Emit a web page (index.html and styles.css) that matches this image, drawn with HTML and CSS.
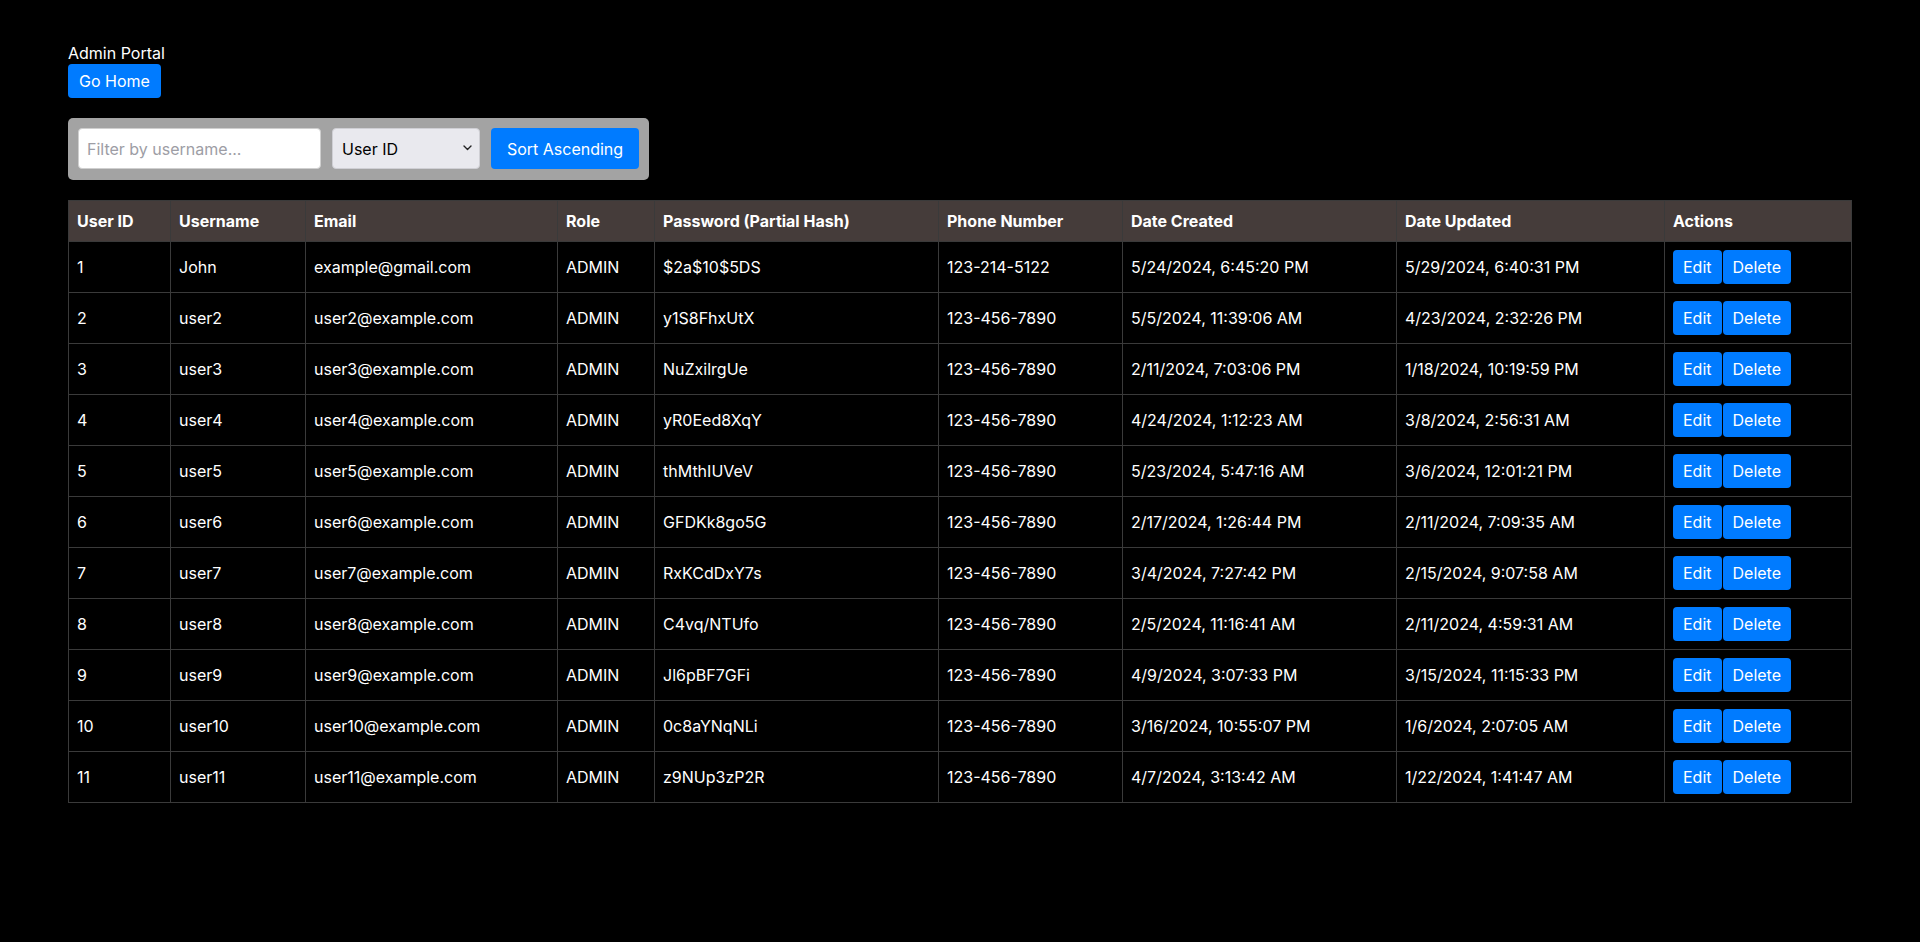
FILE: index.html
```html
<!DOCTYPE html>
<html lang="en">
<head>
<meta charset="utf-8">
<title>Admin Portal</title>
<link rel="stylesheet" href="styles.css">
</head>
<body>
<div class="page">
  <div class="title">Admin Portal</div>
  <button class="btn">Go Home</button>
  <div class="filters">
    <input class="filter-input" type="text" placeholder="Filter by username...">
    <div class="select-wrap">
      <select class="sort-select">
        <option>User ID</option>
        <option>Username</option>
        <option>Email</option>
      </select>
      <svg class="chev" width="9" height="6" viewBox="0 0 9 6"><path d="M1 1l3.5 3.5L8 1" fill="none" stroke="#222" stroke-width="1.4" stroke-linecap="round" stroke-linejoin="round"/></svg>
    </div>
    <button class="btn btn-sort">Sort Ascending</button>
  </div>
  <table class="users">
    <thead>
      <tr>
        <th class="c-id">User ID</th>
        <th class="c-user">Username</th>
        <th class="c-email">Email</th>
        <th class="c-role">Role</th>
        <th class="c-pass">Password (Partial Hash)</th>
        <th class="c-phone">Phone Number</th>
        <th class="c-created">Date Created</th>
        <th class="c-updated">Date Updated</th>
        <th class="c-actions">Actions</th>
      </tr>
    </thead>
    <tbody>
      <tr><td>1</td><td>John</td><td>example@gmail.com</td><td>ADMIN</td><td>$2a$10$5DS</td><td>123-214-5122</td><td>5/24/2024, 6:45:20 PM</td><td>5/29/2024, 6:40:31 PM</td><td><div class="actions"><button class="btn btn-sm">Edit</button><button class="btn btn-sm">Delete</button></div></td></tr>
      <tr><td>2</td><td>user2</td><td>user2@example.com</td><td>ADMIN</td><td>y1S8FhxUtX</td><td>123-456-7890</td><td>5/5/2024, 11:39:06 AM</td><td>4/23/2024, 2:32:26 PM</td><td><div class="actions"><button class="btn btn-sm">Edit</button><button class="btn btn-sm">Delete</button></div></td></tr>
      <tr><td>3</td><td>user3</td><td>user3@example.com</td><td>ADMIN</td><td>NuZxilrgUe</td><td>123-456-7890</td><td>2/11/2024, 7:03:06 PM</td><td>1/18/2024, 10:19:59 PM</td><td><div class="actions"><button class="btn btn-sm">Edit</button><button class="btn btn-sm">Delete</button></div></td></tr>
      <tr><td>4</td><td>user4</td><td>user4@example.com</td><td>ADMIN</td><td>yR0Eed8XqY</td><td>123-456-7890</td><td>4/24/2024, 1:12:23 AM</td><td>3/8/2024, 2:56:31 AM</td><td><div class="actions"><button class="btn btn-sm">Edit</button><button class="btn btn-sm">Delete</button></div></td></tr>
      <tr><td>5</td><td>user5</td><td>user5@example.com</td><td>ADMIN</td><td>thMthIUVeV</td><td>123-456-7890</td><td>5/23/2024, 5:47:16 AM</td><td>3/6/2024, 12:01:21 PM</td><td><div class="actions"><button class="btn btn-sm">Edit</button><button class="btn btn-sm">Delete</button></div></td></tr>
      <tr><td>6</td><td>user6</td><td>user6@example.com</td><td>ADMIN</td><td>GFDKk8go5G</td><td>123-456-7890</td><td>2/17/2024, 1:26:44 PM</td><td>2/11/2024, 7:09:35 AM</td><td><div class="actions"><button class="btn btn-sm">Edit</button><button class="btn btn-sm">Delete</button></div></td></tr>
      <tr><td>7</td><td>user7</td><td>user7@example.com</td><td>ADMIN</td><td>RxKCdDxY7s</td><td>123-456-7890</td><td>3/4/2024, 7:27:42 PM</td><td>2/15/2024, 9:07:58 AM</td><td><div class="actions"><button class="btn btn-sm">Edit</button><button class="btn btn-sm">Delete</button></div></td></tr>
      <tr><td>8</td><td>user8</td><td>user8@example.com</td><td>ADMIN</td><td>C4vq/NTUfo</td><td>123-456-7890</td><td>2/5/2024, 11:16:41 AM</td><td>2/11/2024, 4:59:31 AM</td><td><div class="actions"><button class="btn btn-sm">Edit</button><button class="btn btn-sm">Delete</button></div></td></tr>
      <tr><td>9</td><td>user9</td><td>user9@example.com</td><td>ADMIN</td><td>Jl6pBF7GFi</td><td>123-456-7890</td><td>4/9/2024, 3:07:33 PM</td><td>3/15/2024, 11:15:33 PM</td><td><div class="actions"><button class="btn btn-sm">Edit</button><button class="btn btn-sm">Delete</button></div></td></tr>
      <tr><td>10</td><td>user10</td><td>user10@example.com</td><td>ADMIN</td><td>0c8aYNqNLi</td><td>123-456-7890</td><td>3/16/2024, 10:55:07 PM</td><td>1/6/2024, 2:07:05 AM</td><td><div class="actions"><button class="btn btn-sm">Edit</button><button class="btn btn-sm">Delete</button></div></td></tr>
      <tr><td>11</td><td>user11</td><td>user11@example.com</td><td>ADMIN</td><td>z9NUp3zP2R</td><td>123-456-7890</td><td>4/7/2024, 3:13:42 AM</td><td>1/22/2024, 1:41:47 AM</td><td><div class="actions"><button class="btn btn-sm">Edit</button><button class="btn btn-sm">Delete</button></div></td></tr>
    </tbody>
  </table>
</div>
</body>
</html>
```

FILE: styles.css
```css
* {
  box-sizing: border-box;
}

html, body {
  background: #000;
}

body {
  margin: 8px;
  color: #fff;
  font-family: Inter, "Liberation Sans", Arial, sans-serif;
  font-size: 16px;
}

.page {
  padding: 35px 60px 40px;
  display: flex;
  flex-direction: column;
  align-items: flex-start;
}

.title {
  line-height: 21px;
  height: 21px;
}

.btn {
  font-family: inherit;
  font-size: 16px;
  line-height: 20px;
  color: #fff;
  background: #007bff;
  border: none;
  border-radius: 4px;
  padding: 7px 11px;
  height: 34px;
  cursor: pointer;
}

.filters {
  margin-top: 20px;
  background: #a3a3a3;
  border-radius: 5px;
  padding: 10px;
  display: flex;
  gap: 11px;
  height: 62px;
}

.filter-input {
  width: 243px;
  height: 41px;
  border: 1px solid #cfcfcf;
  border-radius: 4px;
  background: #fff;
  padding: 0 8px;
  font-family: inherit;
  font-size: 16px;
  color: #000;
}

.filter-input::placeholder {
  color: #9d9da5;
}

.select-wrap {
  position: relative;
  width: 148px;
  height: 41px;
}

.sort-select {
  appearance: none;
  -webkit-appearance: none;
  width: 100%;
  height: 100%;
  border: 1px solid #cfcfd4;
  border-radius: 4px;
  background: #e9e9ee;
  padding: 0 9px;
  font-family: inherit;
  font-size: 16px;
  color: #000;
}

.chev {
  position: absolute;
  right: 8px;
  top: 17px;
  pointer-events: none;
}

.btn-sort {
  width: 148px;
  height: 41px;
  padding: 0 14px;
}

.users {
  margin-top: 20px;
  width: 100%;
  border-collapse: collapse;
  border: 1px solid #3a3a3a;
}

.users th,
.users td {
  border: 1px solid #3a3a3a;
  text-align: left;
  vertical-align: middle;
  padding: 8px 8px;
  line-height: 20px;
  white-space: nowrap;
}

.users th {
  background: #453c3a;
  font-weight: 700;
  padding: 10px 8px;
}

.users td {
  height: 51px;
}

.c-id { width: 102px; }
.c-user { width: 135px; }
.c-email { width: 252px; }
.c-role { width: 97px; }
.c-pass { width: 284px; }
.c-phone { width: 184px; }
.c-created { width: 274px; }
.c-updated { width: 268px; }
.c-actions { width: 187px; }

.actions {
  display: flex;
  gap: 1px;
}

.btn-sm {
  padding: 7px 10px;
}
```
